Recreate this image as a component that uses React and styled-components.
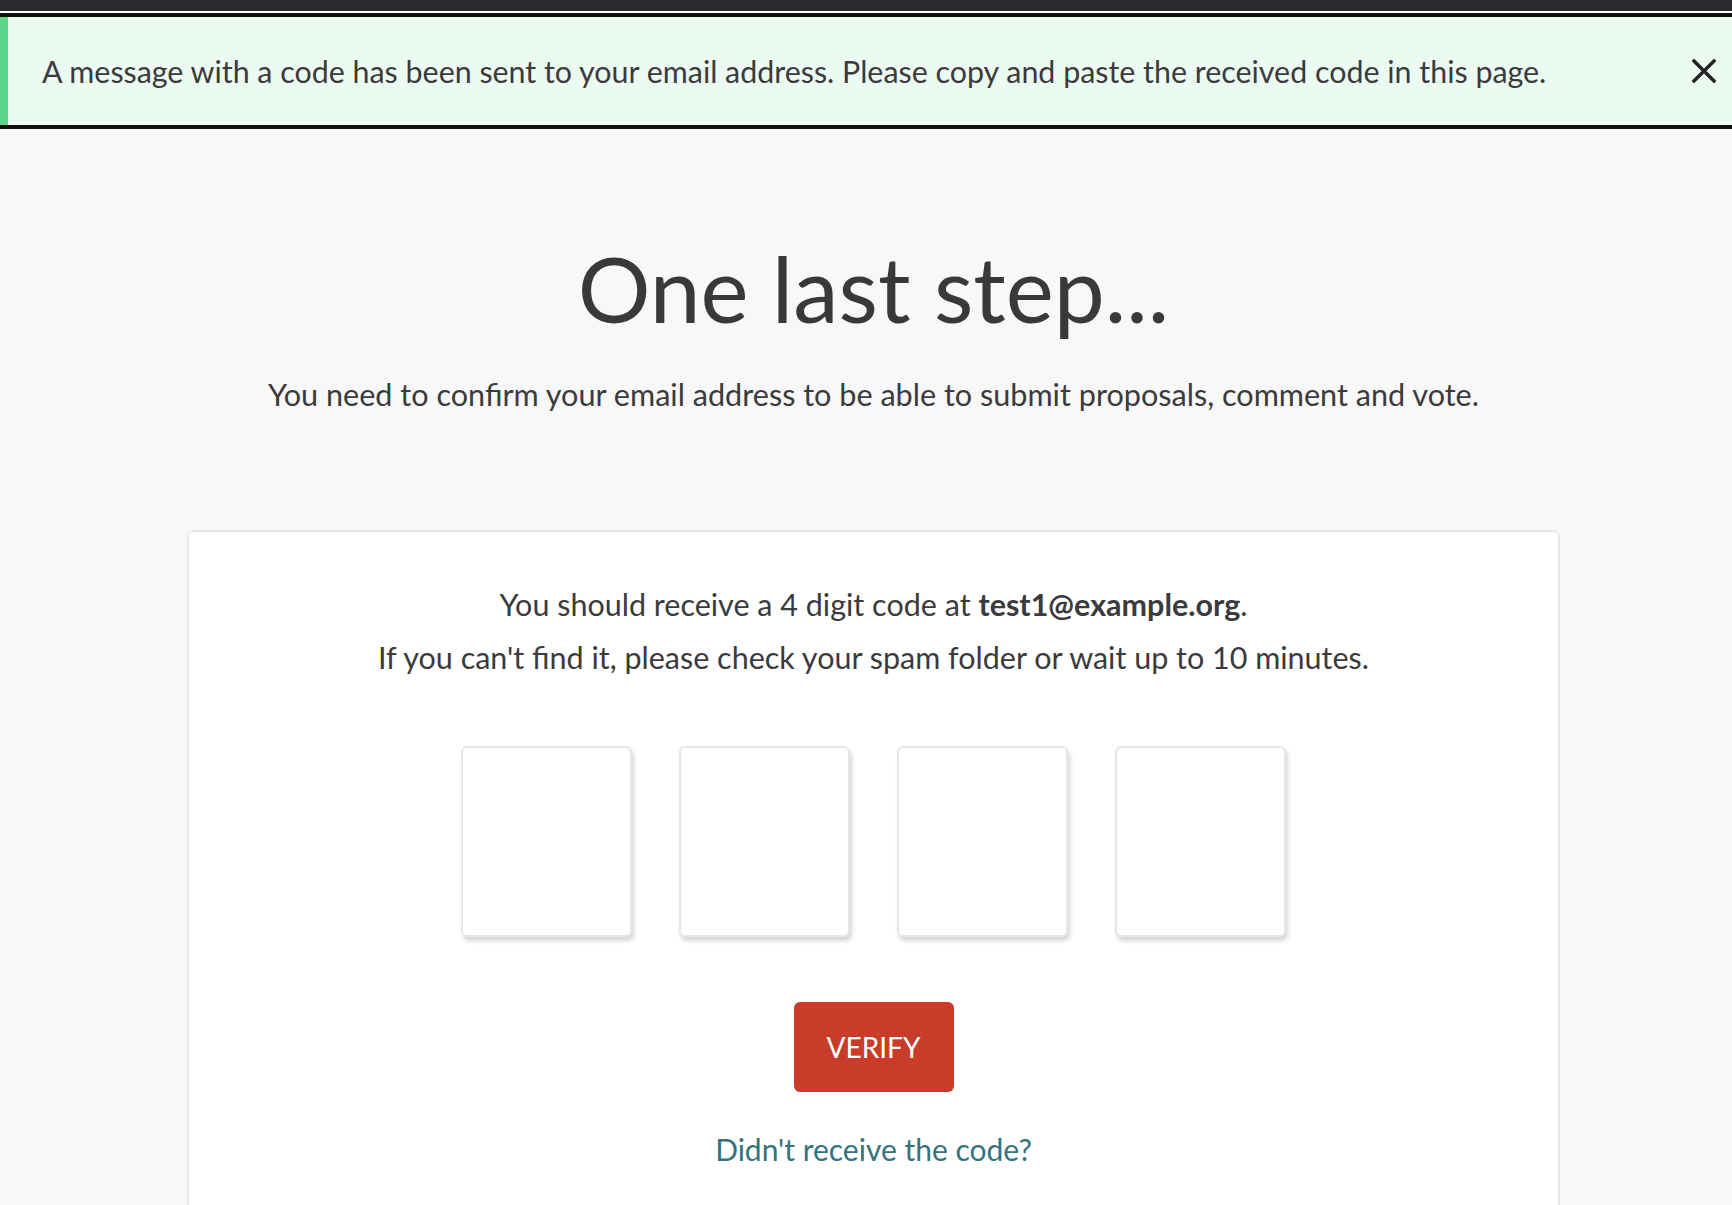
import styled, { createGlobalStyle } from "styled-components";

const GlobalStyle = createGlobalStyle`
  body {
    margin: 0;
    background: #f8f8f8;
    font-family: "Lato", "Liberation Sans", sans-serif;
    color: #3b3a3c;
  }
`;

const TopBar = styled.div`
  height: 11px;
  background: #2b2830;
  border-bottom: 2px solid #ffffff;
`;

const Callout = styled.div`
  display: flex;
  align-items: center;
  justify-content: space-between;
  height: 108px;
  padding: 0 16px 0 42px;
  background: #ecfbf1;
  border-top: 4px solid #111111;
  border-bottom: 4px solid #111111;
  box-shadow: inset 8px 0 0 #5bd68a;
`;

const CalloutText = styled.p`
  margin: 0;
  font-size: 30.4px;
  color: #3b3a3c;
`;

const CloseButton = styled.button`
  display: flex;
  padding: 0;
  border: 0;
  background: none;
  cursor: pointer;
`;

const Main = styled.main`
  display: flex;
  flex-direction: column;
  align-items: center;
  padding: 104px 0 0 15px;
`;

const Title = styled.h1`
  margin: 0;
  font-size: 91px;
  font-weight: 400;
  line-height: 1.2;
  color: #3b383b;
`;

const Lead = styled.p`
  margin: 35px 0 0;
  font-size: 30.6px;
  line-height: 1.2;
`;

const Card = styled.section`
  display: flex;
  flex-direction: column;
  align-items: center;
  box-sizing: border-box;
  width: 1373px;
  margin-top: 116px;
  padding: 46px 0 60px;
  background: #ffffff;
  border: 2px solid #e8e8e8;
  border-radius: 6px;
`;

const Info = styled.p`
  margin: 0;
  font-size: 30.5px;
  line-height: 53px;
  text-align: center;

  strong {
    font-weight: 700;
  }
`;

const CodeRow = styled.div`
  display: flex;
  gap: 47px;
  margin-top: 62px;
`;

const Digit = styled.input`
  box-sizing: border-box;
  width: 171px;
  height: 191px;
  border: 2px solid #e6e6e6;
  border-radius: 6px;
  background: #ffffff;
  box-shadow: 2px 4px 4px rgba(0, 0, 0, 0.16);
  font-family: inherit;
  font-size: 64px;
  text-align: center;
  color: #3b3a3c;
  outline: none;
`;

const Verify = styled.button`
  width: 160px;
  height: 90px;
  margin-top: 65px;
  border: 0;
  border-radius: 6px;
  background: #c93c29;
  color: #ffffff;
  font-family: inherit;
  font-size: 28px;
  cursor: pointer;
`;

const Resend = styled.a`
  margin-top: 39px;
  font-size: 30px;
  line-height: 1.2;
  color: #33737e;
  text-decoration: none;
`;

const App = () => {
  const digits = [0, 1, 2, 3];
  return (
    <>
      <GlobalStyle />
      <TopBar />
      <Callout>
        <CalloutText>
          A message with a code has been sent to your email address. Please
          copy and paste the received code in this page.
        </CalloutText>
        <CloseButton aria-label="Close">
          <svg width="24" height="24" viewBox="0 0 24 24">
            <path
              d="M2 2 L22 22 M22 2 L2 22"
              stroke="#222"
              strokeWidth="3.4"
              strokeLinecap="square"
            />
          </svg>
        </CloseButton>
      </Callout>
      <Main>
        <Title>One last step...</Title>
        <Lead>
          You need to confirm your email address to be able to submit
          proposals, comment and vote.
        </Lead>
        <Card>
          <Info>
            You should receive a 4 digit code at <strong>test1@example.org</strong>.
            <br />
            If you can't find it, please check your spam folder or wait up to 10
            minutes.
          </Info>
          <CodeRow>
            {digits.map((d) => (
              <Digit key={d} type="text" maxLength={1} aria-label={`Digit ${d + 1}`} />
            ))}
          </CodeRow>
          <Verify>VERIFY</Verify>
          <Resend href="#">Didn't receive the code?</Resend>
        </Card>
      </Main>
    </>
  );
};

export default App;
